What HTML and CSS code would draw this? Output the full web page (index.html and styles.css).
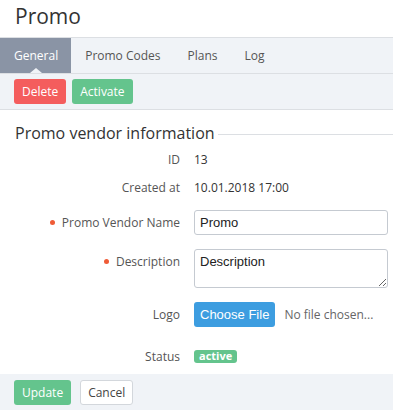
FILE: index.html
```html
<!DOCTYPE html>
<html lang="en">
<head>
  <meta charset="UTF-8" />
  <meta name="viewport" content="width=device-width, initial-scale=1.0"/>
  <title>Promo</title>
  <link rel="stylesheet" href="styles.css">
</head>
<body>

<header class="page-head">
  <h1>Promo</h1>
</header>

<nav class="tabs">
  <a class="active" href="#">General</a>
  <a href="#">Promo Codes</a>
  <a href="#">Plans</a>
  <a href="#">Log</a>
</nav>

<div class="toolbar">
  <button type="button" class="btn btn-red">Delete</button>
  <button type="button" class="btn btn-green">Activate</button>
</div>

<main>
  <div class="section-title">
    <h2>Promo vendor information</h2>
  </div>

  <form class="info-form">
    <div class="row">
      <span class="label">ID</span>
      <span class="value">13</span>
    </div>
    <div class="row">
      <span class="label">Created at</span>
      <span class="value">10.01.2018 17:00</span>
    </div>
    <div class="row row-input">
      <label class="label required" for="vendorName">Promo Vendor Name</label>
      <input type="text" id="vendorName" value="Promo" />
    </div>
    <div class="row row-input">
      <label class="label required" for="description">Description</label>
      <textarea id="description">Description</textarea>
    </div>
    <div class="row row-input">
      <span class="label">Logo</span>
      <div class="file-pick">
        <button type="button" class="btn btn-blue">Choose File</button>
        <span class="file-name">No file chosen...</span>
      </div>
    </div>
    <div class="row row-status">
      <span class="label">Status</span>
      <span class="badge">active</span>
    </div>
  </form>
</main>

<footer class="form-actions">
  <button type="button" class="btn btn-green">Update</button>
  <button type="button" class="btn btn-white">Cancel</button>
</footer>

</body>
</html>
```

FILE: styles.css
```css
body {
  font-family: "Open Sans", Arial, sans-serif;
  font-size: 12px;
  color: #333;
  margin: 0;
  background-color: #fff;
}

.page-head {
  height: 37px;
  border-bottom: 1px solid #dcdfe3;
  padding: 0 15px;
}
.page-head h1 {
  margin: 0;
  font-size: 21px;
  font-weight: 400;
  line-height: 32px;
  color: #333;
}

.tabs {
  display: flex;
  height: 35px;
  background-color: #f0f3f7;
  border-bottom: 1px solid #dcdfe3;
}
.tabs a {
  position: relative;
  display: flex;
  align-items: center;
  padding: 0 13px 0 14px;
  color: #555;
  text-decoration: none;
}
.tabs a.active {
  background-color: #8a94a5;
  color: #fff;
}
.tabs a.active::after {
  content: "";
  position: absolute;
  left: 50%;
  bottom: 0;
  margin-left: -6px;
  border: 6px solid transparent;
  border-bottom: 5px solid #f0f3f7;
  border-top: 0;
}

.toolbar {
  display: flex;
  gap: 6px;
  height: 35px;
  padding: 0 14px;
  align-items: center;
  background-color: #f0f3f7;
  border-bottom: 1px solid #dcdfe3;
}

.btn {
  font-family: "Open Sans", Arial, sans-serif;
  font-size: 12px;
  height: 25px;
  padding: 0 7px;
  border: 1px solid transparent;
  border-radius: 3px;
  color: #fff;
  cursor: pointer;
  white-space: nowrap;
  flex-shrink: 0;
}
.btn-red {
  background-color: #f45d5d;
}
.btn-green {
  background-color: #64c48d;
}
.btn-blue {
  background-color: #3d9de0;
  font-family: "Liberation Sans", Arial, sans-serif;
  font-size: 13px;
  padding: 0 5px;
}
.btn-white {
  background-color: #fff;
  border-color: #d3d7dc;
  color: #444;
}

main {
  padding: 12px 0 4px 15px;
}

.section-title {
  display: flex;
  align-items: center;
  gap: 3px;
}
.section-title::after {
  content: "";
  flex-grow: 1;
  height: 1px;
  background-color: #dcdfe3;
  margin-top: 2px;
}
.section-title h2 {
  margin: 0;
  font-size: 16px;
  font-weight: 400;
  color: #333;
  line-height: 22px;
}

.info-form {
  display: flex;
  flex-direction: column;
  margin-top: 1px;
  padding-right: 5px;
}

.row {
  display: flex;
  align-items: center;
  gap: 14px;
  height: 28px;
}
.row-input {
  align-items: flex-start;
  height: auto;
  margin: 9px 0 5px;
}
.row-input .label {
  padding-top: 4px;
}
.row-status {
  margin-top: 10px;
}

.label {
  width: 165px;
  flex-shrink: 0;
  text-align: right;
  color: #555;
}
.label.required::before {
  content: "";
  display: inline-block;
  width: 5px;
  height: 5px;
  border-radius: 50%;
  background-color: #ef5b36;
  margin-right: 7px;
  vertical-align: 2px;
}

.value {
  color: #333;
}

input,
textarea {
  width: 194px;
  box-sizing: border-box;
  border: 1px solid #c5cad1;
  border-radius: 3px;
  font-family: "Liberation Sans", Arial, sans-serif;
  font-size: 13px;
  color: #222;
  padding: 4px 5px;
  margin: 0;
}
input {
  height: 25px;
}
textarea {
  display: block;
  height: 39px;
  resize: vertical;
}

.file-pick {
  display: flex;
  align-items: center;
  gap: 9px;
}
.file-name {
  color: #666;
  white-space: nowrap;
}

.badge {
  display: inline-block;
  background-color: #64c48d;
  color: #fff;
  font-size: 11px;
  font-weight: 700;
  line-height: 12px;
  padding: 0 5px 1px;
  border-radius: 3px;
}

.form-actions {
  display: flex;
  gap: 9px;
  height: 36px;
  padding: 0 14px;
  align-items: center;
  background-color: #f0f3f7;
}
```
